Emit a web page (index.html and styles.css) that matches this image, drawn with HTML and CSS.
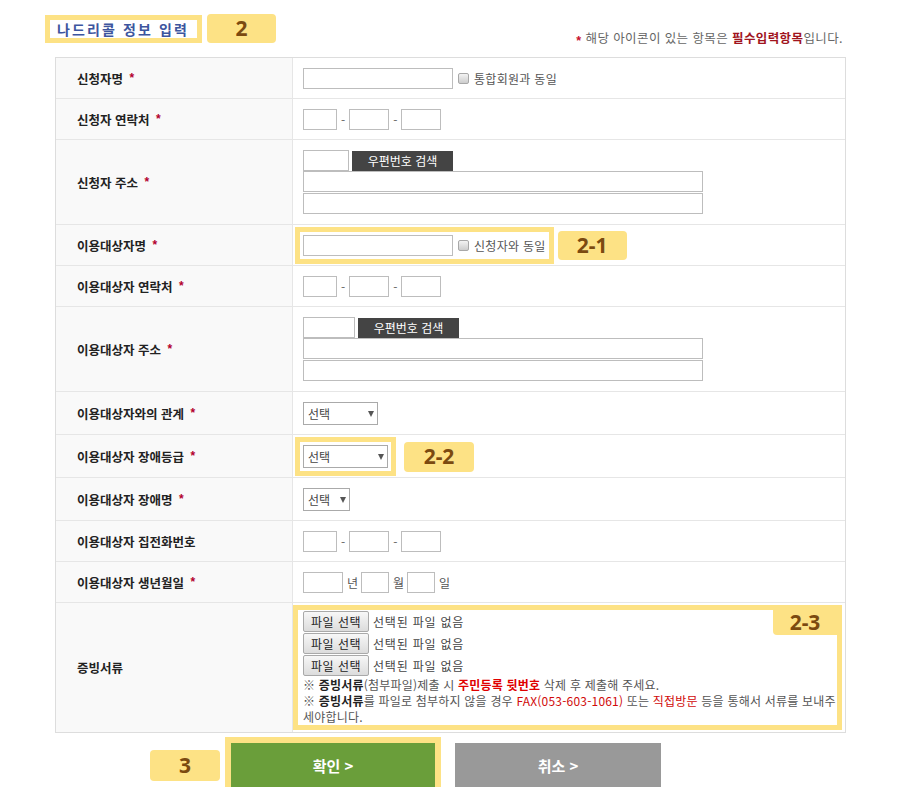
FILE: index.html
```html
<!DOCTYPE html>
<html lang="ko">
<head>
<meta charset="utf-8">
<title>나드리콜 정보 입력</title>
<link rel="stylesheet" href="styles.css">
</head>
<body>
<div class="page">
  <div class="head">
    <h2 class="title">나드리콜 정보 입력</h2>
    <span class="badge badge-h">2</span>
    <p class="note"><span class="nreq">*</span> 해당 아이콘이 있는 항목은 <strong>필수입력항목</strong>입니다.</p>
  </div>

  <div class="form">
    <div class="row">
      <div class="label">신청자명 <span class="req">*</span></div>
      <div class="value">
        <input class="in w150" type="text">
        <span class="chk"></span><span class="txt">통합회원과 동일</span>
      </div>
    </div>

    <div class="row">
      <div class="label">신청자 연락처 <span class="req">*</span></div>
      <div class="value">
        <input class="in p1" type="text"><span class="dash">-</span><input class="in p2" type="text"><span class="dash">-</span><input class="in p2" type="text">
      </div>
    </div>

    <div class="row">
      <div class="label">신청자 주소 <span class="req">*</span></div>
      <div class="value addr">
        <div class="zip"><input class="in z46" type="text"><button class="zip-btn" type="button">우편번호 검색</button></div>
        <input class="in long" type="text">
        <input class="in long second" type="text">
      </div>
    </div>

    <div class="row">
      <div class="label">이용대상자명 <span class="req">*</span></div>
      <div class="value">
        <div class="hl">
          <input class="in w150" type="text">
          <span class="chk"></span><span class="txt">신청자와 동일</span>
        </div>
        <span class="badge badge-in b21">2-1</span>
      </div>
    </div>

    <div class="row">
      <div class="label">이용대상자 연락처 <span class="req">*</span></div>
      <div class="value">
        <input class="in p1" type="text"><span class="dash">-</span><input class="in p2" type="text"><span class="dash">-</span><input class="in p2" type="text">
      </div>
    </div>

    <div class="row">
      <div class="label">이용대상자 주소 <span class="req">*</span></div>
      <div class="value addr">
        <div class="zip"><input class="in z52" type="text"><button class="zip-btn" type="button">우편번호 검색</button></div>
        <input class="in long" type="text">
        <input class="in long second" type="text">
      </div>
    </div>

    <div class="row">
      <div class="label">이용대상자와의 관계 <span class="req">*</span></div>
      <div class="value">
        <span class="sel-wrap"><select class="sel s75"><option>선택</option></select></span>
      </div>
    </div>

    <div class="row">
      <div class="label">이용대상자 장애등급 <span class="req">*</span></div>
      <div class="value">
        <span class="sel-wrap hl"><select class="sel s85"><option>선택</option></select></span>
        <span class="badge badge-in b22">2-2</span>
      </div>
    </div>

    <div class="row">
      <div class="label">이용대상자 장애명 <span class="req">*</span></div>
      <div class="value">
        <span class="sel-wrap"><select class="sel s47"><option>선택</option></select></span>
      </div>
    </div>

    <div class="row">
      <div class="label">이용대상자 집전화번호</div>
      <div class="value">
        <input class="in p1" type="text"><span class="dash">-</span><input class="in p2" type="text"><span class="dash">-</span><input class="in p2" type="text">
      </div>
    </div>

    <div class="row">
      <div class="label">이용대상자 생년월일 <span class="req">*</span></div>
      <div class="value">
        <input class="in y40" type="text"><span class="unit">년</span><input class="in m28" type="text"><span class="unit">월</span><input class="in m28" type="text"><span class="unit">일</span>
      </div>
    </div>

    <div class="row">
      <div class="label">증빙서류</div>
      <div class="value files">
        <div class="hl-box">
          <span class="badge badge-corner">2-3</span>
          <div class="file"><button class="fbtn" type="button">파일 선택</button><span class="fname">선택된 파일 없음</span></div>
          <div class="file"><button class="fbtn" type="button">파일 선택</button><span class="fname">선택된 파일 없음</span></div>
          <div class="file"><button class="fbtn" type="button">파일 선택</button><span class="fname">선택된 파일 없음</span></div>
          <p class="fnote">※ <b>증빙서류</b>(첨부파일)제출 시 <b class="red">주민등록 뒷번호</b> 삭제 후 제출해 주세요.</p>
          <p class="fnote">※ <b>증빙서류</b>를 파일로 첨부하지 않을 경우 <span class="red">FAX(053-603-1061)</span> 또는 <span class="red">직접방문</span> 등을 통해서 서류를 보내주<br>세야합니다.</p>
        </div>
      </div>
    </div>
  </div>

  <div class="actions">
    <span class="badge badge-3">3</span>
    <button class="btn ok" type="button">확인 &gt;</button>
    <button class="btn cancel" type="button">취소 &gt;</button>
  </div>
</div>
</body>
</html>
```

FILE: styles.css
```css
* { box-sizing: border-box; }

body {
  margin: 0;
  background: #fff;
  font-family: "Noto Sans CJK KR", "Noto Sans", sans-serif;
  color: #555;
}

.page {
  width: 791px;
  margin-left: 55px;
  padding-top: 14px;
}

/* header */
.head {
  display: flex;
  align-items: flex-start;
  height: 43px;
}

.title {
  margin: 1px 0 0 -10px;
  width: 157px;
  height: 28px;
  border: 5px solid #fde285;
  padding: 0 0 0 7px;
  font-size: 14px;
  font-weight: 700;
  line-height: 18px;
  letter-spacing: 2.1px;
  color: #3d559e;
  white-space: nowrap;
  overflow: hidden;
}

.badge {
  display: flex;
  align-items: center;
  justify-content: center;
  background: #fde285;
  color: #7b4a10;
  font-family: "Noto Sans", "Open Sans", sans-serif;
  font-weight: 700;
  font-size: 21px;
  line-height: 1;
  border-radius: 4px;
  flex: none;
}

.badge-h {
  width: 69px;
  height: 29px;
  margin-left: 5px;
}

.note {
  margin: 0 3px 9px auto;
  align-self: flex-end;
  font-size: 12.5px;
  line-height: 14px;
  letter-spacing: 0.4px;
  color: #666;
}

.note strong {
  color: #a0141e;
  font-weight: 700;
}

.nreq {
  color: #c8102e;
  font-family: "Liberation Sans", sans-serif;
  font-weight: 700;
  vertical-align: -2px;
}

/* form table */
.form {
  border: 1px solid #ddd;
}

.row {
  display: grid;
  grid-template-columns: 237px 1fr;
  border-bottom: 1px solid #e6e6e6;
}

.row:last-child { border-bottom: 0; }

.label {
  display: flex;
  align-items: center;
  padding-left: 21px;
  background: #f9f9f9;
  border-right: 1px solid #e6e6e6;
  font-size: 12.5px;
  font-weight: 700;
  color: #222;
  white-space: pre;
}

.req {
  margin-left: 3px;
  color: #b3002d;
  font-family: "Liberation Sans", sans-serif;
  font-size: 12px;
  font-weight: 700;
  vertical-align: -2px;
}

.value {
  display: flex;
  align-items: center;
  padding: 10px 10px 9px;
  font-size: 12px;
  line-height: 16px;
  color: #555;
}

.in {
  height: 21px;
  border: 1px solid #bdbdbd;
  background: #fff;
  padding: 0 3px;
  font: inherit;
  margin: 0;
  border-radius: 0;
  flex: none;
}

.w150 { width: 150px; }
.p1 { width: 34px; }
.p2 { width: 40px; }
.z46 { width: 46px; }
.z52 { width: 52px; }
.long { width: 400px; }
.long.second { margin-top: 1px; }
.y40 { width: 40px; }
.m28 { width: 28px; }

.dash {
  margin: 0 4px;
  color: #666;
}

.unit {
  margin: 0 3px 0 4px;
  color: #555;
}

.chk {
  width: 11px;
  height: 11px;
  margin: 0 5px;
  border: 1px solid #a8a8a8;
  border-radius: 2px;
  background: linear-gradient(#f3f3f3, #cdcdcd);
  flex: none;
}

.txt { color: #555; white-space: nowrap; letter-spacing: 0.3px; }

/* address */
.value.addr {
  flex-direction: column;
  align-items: flex-start;
  padding-bottom: 10px;
}

.zip {
  display: flex;
  align-items: center;
  height: 21px;
}

.zip-btn {
  width: 101px;
  height: 20px;
  margin-left: 3px;
  border: 0;
  background: #444;
  color: #fff;
  font-family: inherit;
  font-size: 12px;
  line-height: 20px;
  padding: 0;
}

/* select */
.sel-wrap {
  position: relative;
  display: inline-block;
  height: 23px;
}

.sel-wrap::after {
  content: "";
  position: absolute;
  right: 4px;
  top: 9px;
  border-left: 3px solid transparent;
  border-right: 3px solid transparent;
  border-top: 6px solid #555;
  pointer-events: none;
}

.sel {
  -webkit-appearance: none;
  appearance: none;
  height: 23px;
  border: 1px solid #aaa;
  border-radius: 0;
  background: #fff;
  padding: 0 0 0 4px;
  margin: 0;
  font-family: inherit;
  font-size: 12px;
  color: #444;
}

.s75 { width: 75px; }
.s85 { width: 85px; }
.s47 { width: 47px; }

/* highlight annotations */
.hl {
  display: flex;
  align-items: center;
  outline: 5px solid #fde285;
  outline-offset: 3px;
}

.badge-in {
  width: 69px;
  height: 29px;
  margin: -4px 0;
}

.b21 { margin-left: 12px; }
.b22 { margin-left: 16px; width: 70px; height: 30px; }

/* files */
.value.files {
  display: block;
  padding: 2px 3px 2px 0;
}

.hl-box {
  position: relative;
  border: 5px solid #fde285;
  padding: 1px 0 0 5px;
}

.badge-corner {
  position: absolute;
  top: 0;
  right: 0;
  width: 64px;
  height: 25px;
  border-radius: 0 0 0 4px;
}

.file {
  display: flex;
  align-items: center;
  height: 21px;
  margin-bottom: 1px;
}

.fbtn {
  width: 66px;
  height: 21px;
  padding: 0;
  border: 1px solid #a9a9a9;
  border-radius: 2px;
  background: linear-gradient(#f7f7f7, #dcdcdc);
  font-family: inherit;
  font-size: 12px;
  letter-spacing: 0.5px;
  color: #222;
}

.fname {
  margin-left: 4px;
  font-size: 12px;
  letter-spacing: 0.8px;
  color: #444;
}

.fnote {
  margin: 0;
  font-size: 12px;
  line-height: 16px;
  letter-spacing: 0.2px;
  color: #555;
  white-space: nowrap;
}

.fnote b { color: #222; font-weight: 700; }
.fnote .red { color: #d10a0a; }
.fnote b.red { color: #e00000; }

/* actions */
.actions {
  display: flex;
  align-items: center;
  margin-top: 10px;
  padding-left: 95px;
}

.badge-3 {
  width: 70px;
  height: 31px;
  margin-right: 11px;
}

.btn {
  height: 44px;
  border: 0;
  padding: 0;
  color: #fff;
  font-family: inherit;
  font-size: 15px;
  font-weight: 700;
}

.ok {
  width: 204px;
  background: #6a9e3a;
  outline: 6px solid #fde285;
}

.cancel {
  width: 206px;
  margin-left: 20px;
  background: #999;
}
```
